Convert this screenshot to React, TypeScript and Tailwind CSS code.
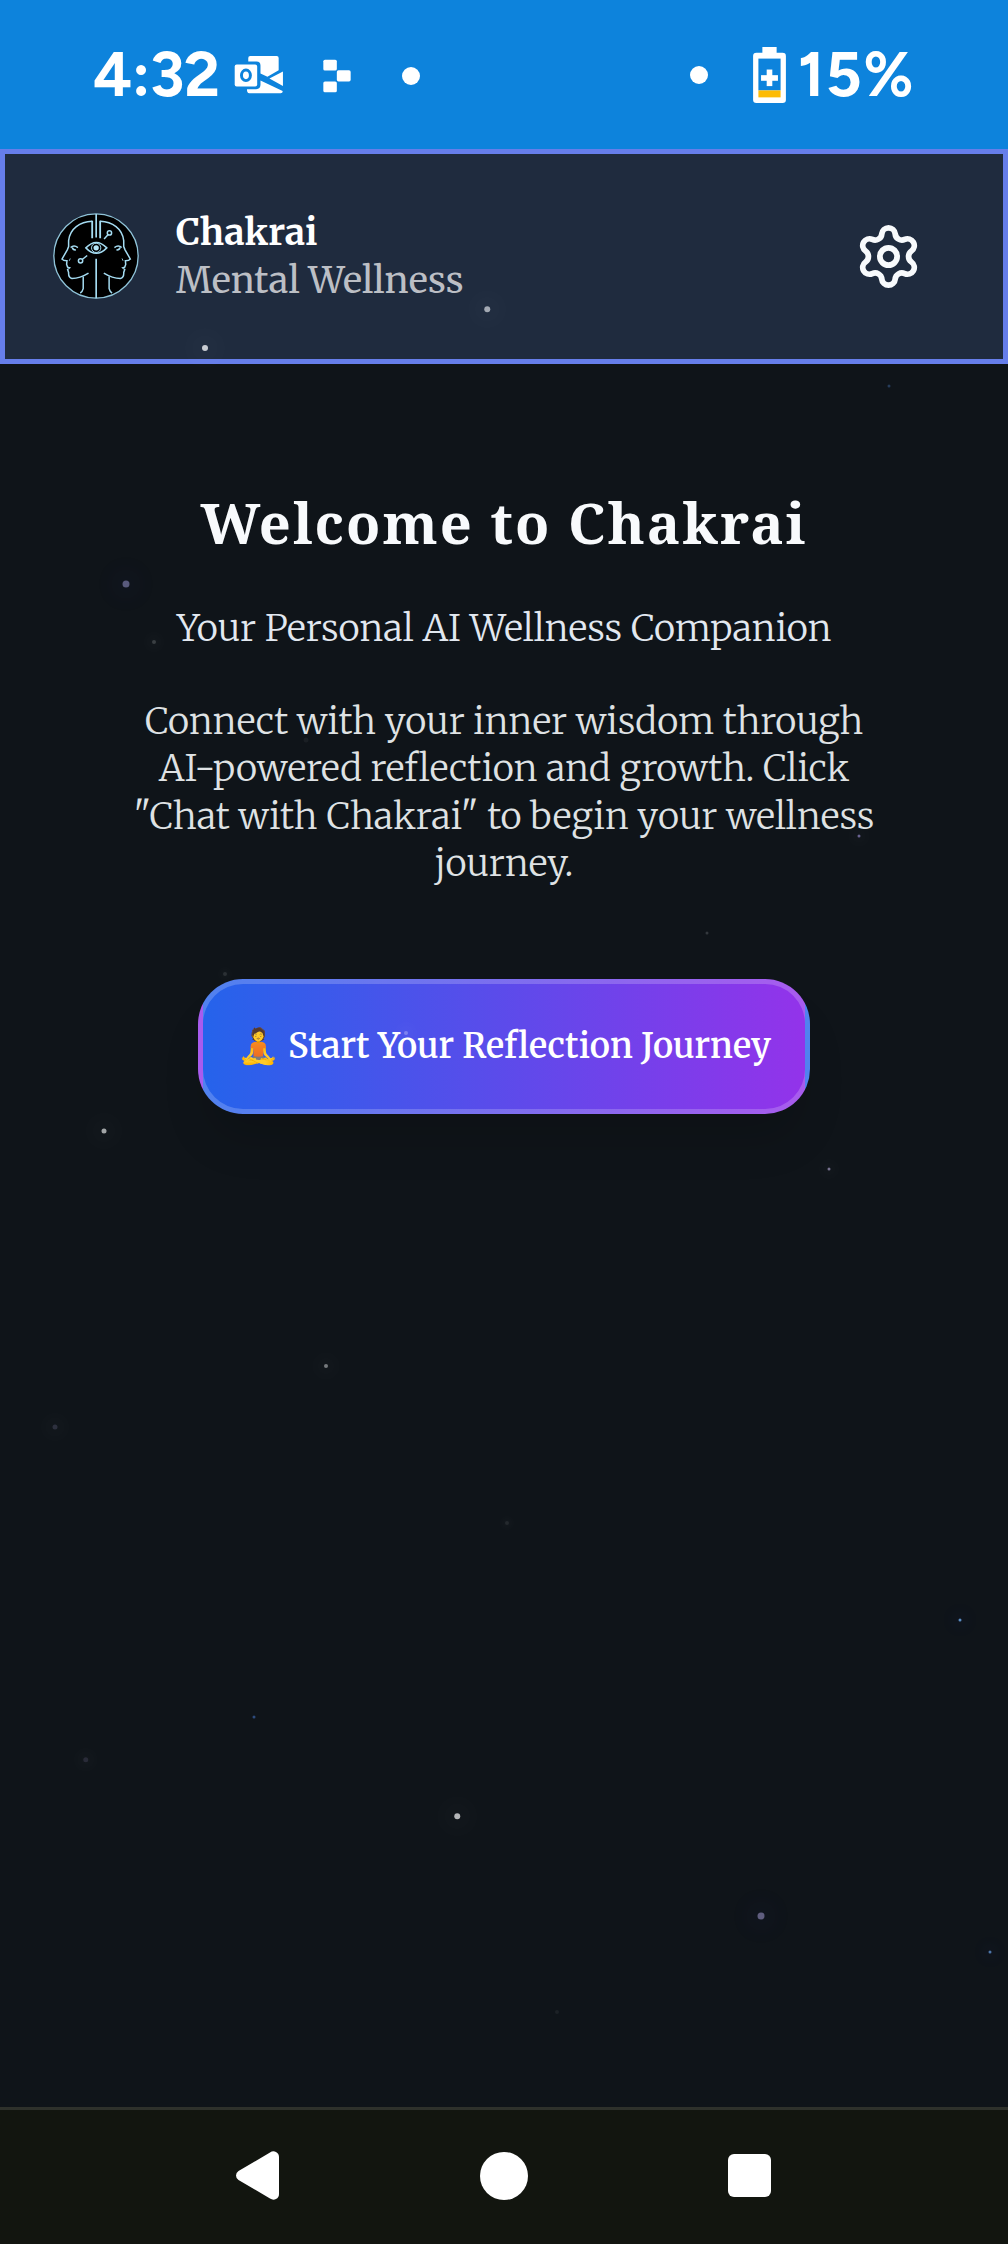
import { Settings } from "lucide-react";

type Star = { x: number; y: number; size: number; color: string; glow: number; glowColor: string };

const WHITE = "rgba(255,255,255,0.045)";
const BLUE = "rgba(80,90,255,0.05)";
const VIOLET = "rgba(90,60,200,0.06)";

const stars: Star[] = [
  { x: 205, y: 348, size: 6, color: "#c8ccd2", glow: 30, glowColor: WHITE },
  { x: 487, y: 309, size: 5.5, color: "#a3a9b3", glow: 28, glowColor: WHITE },
  { x: 888.5, y: 385.5, size: 3, color: "#263c5a", glow: 0, glowColor: BLUE },
  { x: 125.5, y: 584, size: 7, color: "#595a7c", glow: 26, glowColor: VIOLET },
  { x: 154, y: 642, size: 4, color: "#3a3f43", glow: 14, glowColor: WHITE },
  { x: 306, y: 740, size: 5, color: "#1a1f24", glow: 0, glowColor: WHITE },
  { x: 858.5, y: 835.5, size: 3, color: "#696391", glow: 16, glowColor: WHITE },
  { x: 706.5, y: 933, size: 3, color: "#33383d", glow: 0, glowColor: WHITE },
  { x: 225, y: 974, size: 4, color: "#2b3034", glow: 8, glowColor: WHITE },
  { x: 406, y: 1033, size: 4, color: "#7c82ef", glow: 16, glowColor: WHITE },
  { x: 103.7, y: 1131, size: 5, color: "#a1a4a6", glow: 28, glowColor: WHITE },
  { x: 828.5, y: 1168.5, size: 3, color: "#77718f", glow: 15, glowColor: WHITE },
  { x: 325.7, y: 1366, size: 4, color: "#75797c", glow: 21, glowColor: WHITE },
  { x: 54.5, y: 1426.5, size: 5, color: "#2d303e", glow: 20, glowColor: WHITE },
  { x: 506.7, y: 1523, size: 4, color: "#24292d", glow: 8, glowColor: WHITE },
  { x: 959.5, y: 1619.5, size: 3, color: "#5b8dc4", glow: 17, glowColor: BLUE },
  { x: 253.5, y: 1716.5, size: 3, color: "#2d4a7c", glow: 0, glowColor: BLUE },
  { x: 85.5, y: 1759.5, size: 5.5, color: "#292b38", glow: 16, glowColor: WHITE },
  { x: 457, y: 1816, size: 5.5, color: "#b4b6b8", glow: 30, glowColor: WHITE },
  { x: 760.5, y: 1915.5, size: 7, color: "#5f5d7e", glow: 26, glowColor: VIOLET },
  { x: 989.5, y: 1951.5, size: 3, color: "#4c75a8", glow: 16, glowColor: BLUE },
  { x: 556.7, y: 2012, size: 4, color: "#1c2126", glow: 0, glowColor: WHITE },
];

function StarField() {
  return (
    <div className="pointer-events-none absolute inset-0 overflow-hidden">
      {stars.map((s) => (
        <span
          key={`${s.x}-${s.y}`}
          className="absolute -translate-x-1/2 -translate-y-1/2 rounded-full"
          style={{
            left: s.x,
            top: s.y,
            width: s.size,
            height: s.size,
            backgroundColor: s.color,
            boxShadow: s.glow ? `0 0 ${s.glow}px ${s.glow / 3}px ${s.glowColor}` : "none",
          }}
        />
      ))}
    </div>
  );
}

function MailIcon() {
  return (
    <svg viewBox="702 168 149 118" className="h-[39px] w-[50px]" fill="#fff">
      <path d="M750 171H830Q836 171 836 177V214L802 234L781 224V200Q781 188 769 188H744V177Q744 171 750 171Z" />
      <path d="M849 218V262L808 239Z" />
      <path d="M781 245L848 277Q849 284 842 284H747Q740 284 740 272H768Q781 270 781 258Z" />
      <rect x="703" y="197" width="68" height="66" rx="6" />
      <ellipse cx="737" cy="229.500" rx="13.500" ry="16" fill="#fff" stroke="#0d83dc" strokeWidth="9" />
    </svg>
  );
}

function BlocksIcon() {
  return (
    <svg viewBox="968 180 85 101" className="h-[34px] w-[28px]" fill="#fff">
      <rect x="969" y="181" width="41" height="33" rx="5" />
      <rect x="1010" y="213" width="42" height="34" rx="5" />
      <rect x="969" y="247" width="41" height="33" rx="5" />
    </svg>
  );
}

function BatteryIcon() {
  return (
    <svg viewBox="750 142 99 169" className="h-[56px] w-[33px]" fill="#fff">
      <rect x="778" y="142" width="43" height="24" />
      <rect x="750" y="159" width="99" height="152" rx="10" />
      <rect x="766" y="177" width="67" height="96" fill="#0d83dc" />
      <rect x="766" y="273" width="67" height="21" fill="#fdbb05" />
      <rect x="791" y="210" width="17" height="50" />
      <rect x="774" y="227" width="51" height="17" />
    </svg>
  );
}

function Face() {
  return (
    <>
      <path d="M187 92C150 93 120 114 116 150V168L112 178L96 206Q100 211 111 211L110 222L113 230L119 232L113 237L116 246Q115 262 126 264Q150 264 176 248" />
      <path d="M160 258V295Q158 304 151 308" />
      <path d="M122 171Q132 162 144 171M127 171Q129 179 138 178" />
      <path d="M118 211L121 204" strokeWidth="2.500" />
    </>
  );
}

function Logo() {
  return (
    <svg viewBox="69 67 259 259" className="-mt-[2px] h-[86px] w-[86px]" fill="none" stroke="#a5dcf2" strokeWidth="4.500">
      <circle cx="198.500" cy="196.500" r="127" fill="#000" stroke="#8fc3d8" strokeWidth="4" />
      <Face />
      <g transform="matrix(-1 0 0 1 398 0)">
        <Face />
      </g>
      <path d="M187 90V143M211 90V143" strokeWidth="5.500" />
      <path d="M199 70V141M199 205V324" strokeWidth="5" />
      <path d="M168 172Q199 139 231 172Q199 205 168 172Z" />
      <circle cx="199" cy="172" r="14" strokeWidth="3" />
      <circle cx="199" cy="172" r="8" fill="#b5e6f8" stroke="none" />
      <circle cx="239" cy="127" r="6.500" />
      <path d="M235 132L223 145" />
      <circle cx="152" cy="211" r="6.500" />
      <path d="M157 207L172 195" />
    </svg>
  );
}

function StatusBar() {
  return (
    <div className="flex h-[149px] shrink-0 items-center bg-[#0d83dc] pr-[92px] pl-[93px] text-white">
      <span className="mt-[1px] w-[141px] font-[Figtree,Poppins,Lato,sans-serif] text-[62px] leading-[70px] font-bold tracking-[-0.5px]">
        4:32
      </span>
      <MailIcon />
      <span className="ml-[39px] flex pt-[3px]">
        <BlocksIcon />
      </span>
      <span className="mt-[3px] ml-[51px] size-[18px] rounded-full bg-white" />
      <span className="ml-auto size-[18px] rounded-full bg-white" />
      <span className="ml-[45px]">
        <BatteryIcon />
      </span>
      <span className="mt-[1px] ml-[12px] w-[118px] font-[Figtree,Poppins,Lato,sans-serif] text-[62px] leading-[70px] font-bold tracking-[1.5px] whitespace-nowrap">
        15%
      </span>
    </div>
  );
}

function Header() {
  return (
    <header className="flex h-[215px] shrink-0 items-center border-[5px] border-[#667eea] bg-[#1f2b3e] pr-[80px] pl-[48px]">
      <Logo />
      <div className="-mt-[2px] ml-[37px] font-[Merriweather,serif] text-[36.4px] leading-[48px]">
        <div className="font-bold text-white">Chakrai</div>
        <div className="font-normal text-[#bcbfc5]">Mental Wellness</div>
      </div>
      <Settings className="ml-auto size-[69px] text-[#f8fafc]" strokeWidth={2} />
    </header>
  );
}

function NavBar() {
  return (
    <nav className="flex h-[137px] shrink-0 items-center justify-between border-t-[3px] border-[#2e312b] bg-[#12150f] pr-[237px] pb-[3px] pl-[236px]">
      <svg viewBox="0 0 43 49" className="h-[49px] w-[43px]" fill="#fff">
        <path d="M34 1.500Q37 -.5 40 1Q43 2.500 43 6V43Q43 46.500 40 48Q37 49.500 34 47.500L2.500 29Q0 27.500 0 24.500Q0 21.500 2.500 20Z" />
      </svg>
      <span className="size-[48px] rounded-full bg-white" />
      <span className="size-[43px] rounded-[6px] bg-white" />
    </nav>
  );
}

export default function App() {
  return (
    <div className="relative flex h-[2244px] w-[1008px] flex-col overflow-hidden bg-[#0f1419]">
      <StatusBar />
      <Header />
      <main className="flex flex-1 flex-col items-center text-center font-[Merriweather,serif]">
        <h1 className="mt-[124px] font-['Noto_Serif',serif] text-[56px] leading-[68px] font-bold tracking-[2px] text-[#f8fafc]">
          Welcome to Chakrai
        </h1>
        <p className="mt-[49px] text-[36.5px] leading-[47px] font-light text-[#e2e8f0]">
          Your Personal AI Wellness Companion
        </p>
        <p className="mt-[46px] w-[760px] text-[36.5px] leading-[47.4px] font-light text-[#dfe2e4]">
          Connect with your inner wisdom through AI-powered reflection and growth. Click "Chat with Chakrai" to begin your
          wellness journey.
        </p>
        <button className="mt-[91px] h-[135px] w-[612px] rounded-[45px] border-[5px] border-white/20 bg-linear-to-r/srgb from-[#2563eb] to-[#9333ea] pb-[1px] text-[34.2px] font-semibold whitespace-nowrap text-white shadow-[0_34px_45px_-10px_rgba(0,0,0,0.15)]">
          🧘 Start Your Reflection Journey
        </button>
      </main>
      <NavBar />
      <StarField />
    </div>
  );
}
